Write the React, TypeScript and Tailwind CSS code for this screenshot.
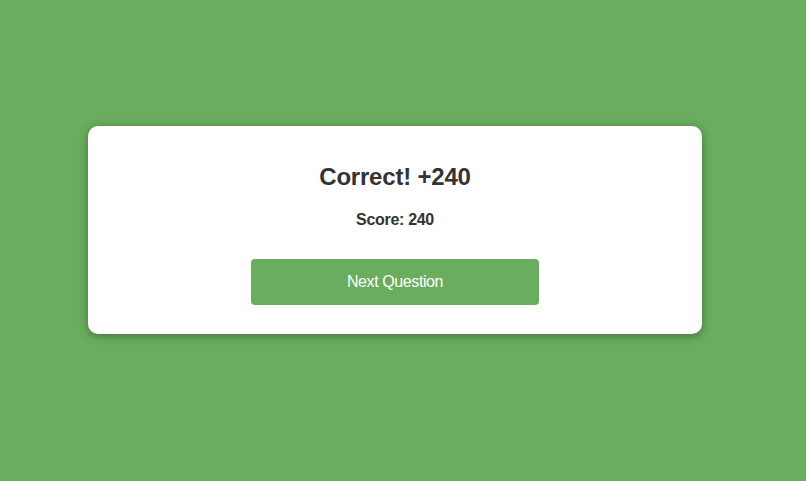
export default function App() {
  return (
    <div
      className="min-h-[481px] w-full bg-[#6aad5e] pt-[126px]"
      style={{ fontFamily: '"Liberation Sans", Arial, sans-serif' }}
    >
      <div className="ml-[88px] flex w-[614px] flex-col items-center rounded-[10px] bg-white pt-[37px] pb-[29px] shadow-[0_2px_10px_rgba(0,0,0,0.35)]">
        <h2 className="text-[24px] leading-[28px] font-bold tracking-[-0.2px] text-[#333]">Correct! +240</h2>
        <p className="mt-[20px] text-[16px] leading-[18px] font-bold tracking-[-0.3px] text-[#333]">Score: 240</p>
        <button
          type="button"
          className="mt-[30px] h-[46px] w-[288px] rounded-[4px] bg-[#6aad5e] text-[16px] tracking-[-0.4px] text-white"
        >
          Next Question
        </button>
      </div>
    </div>
  );
}
